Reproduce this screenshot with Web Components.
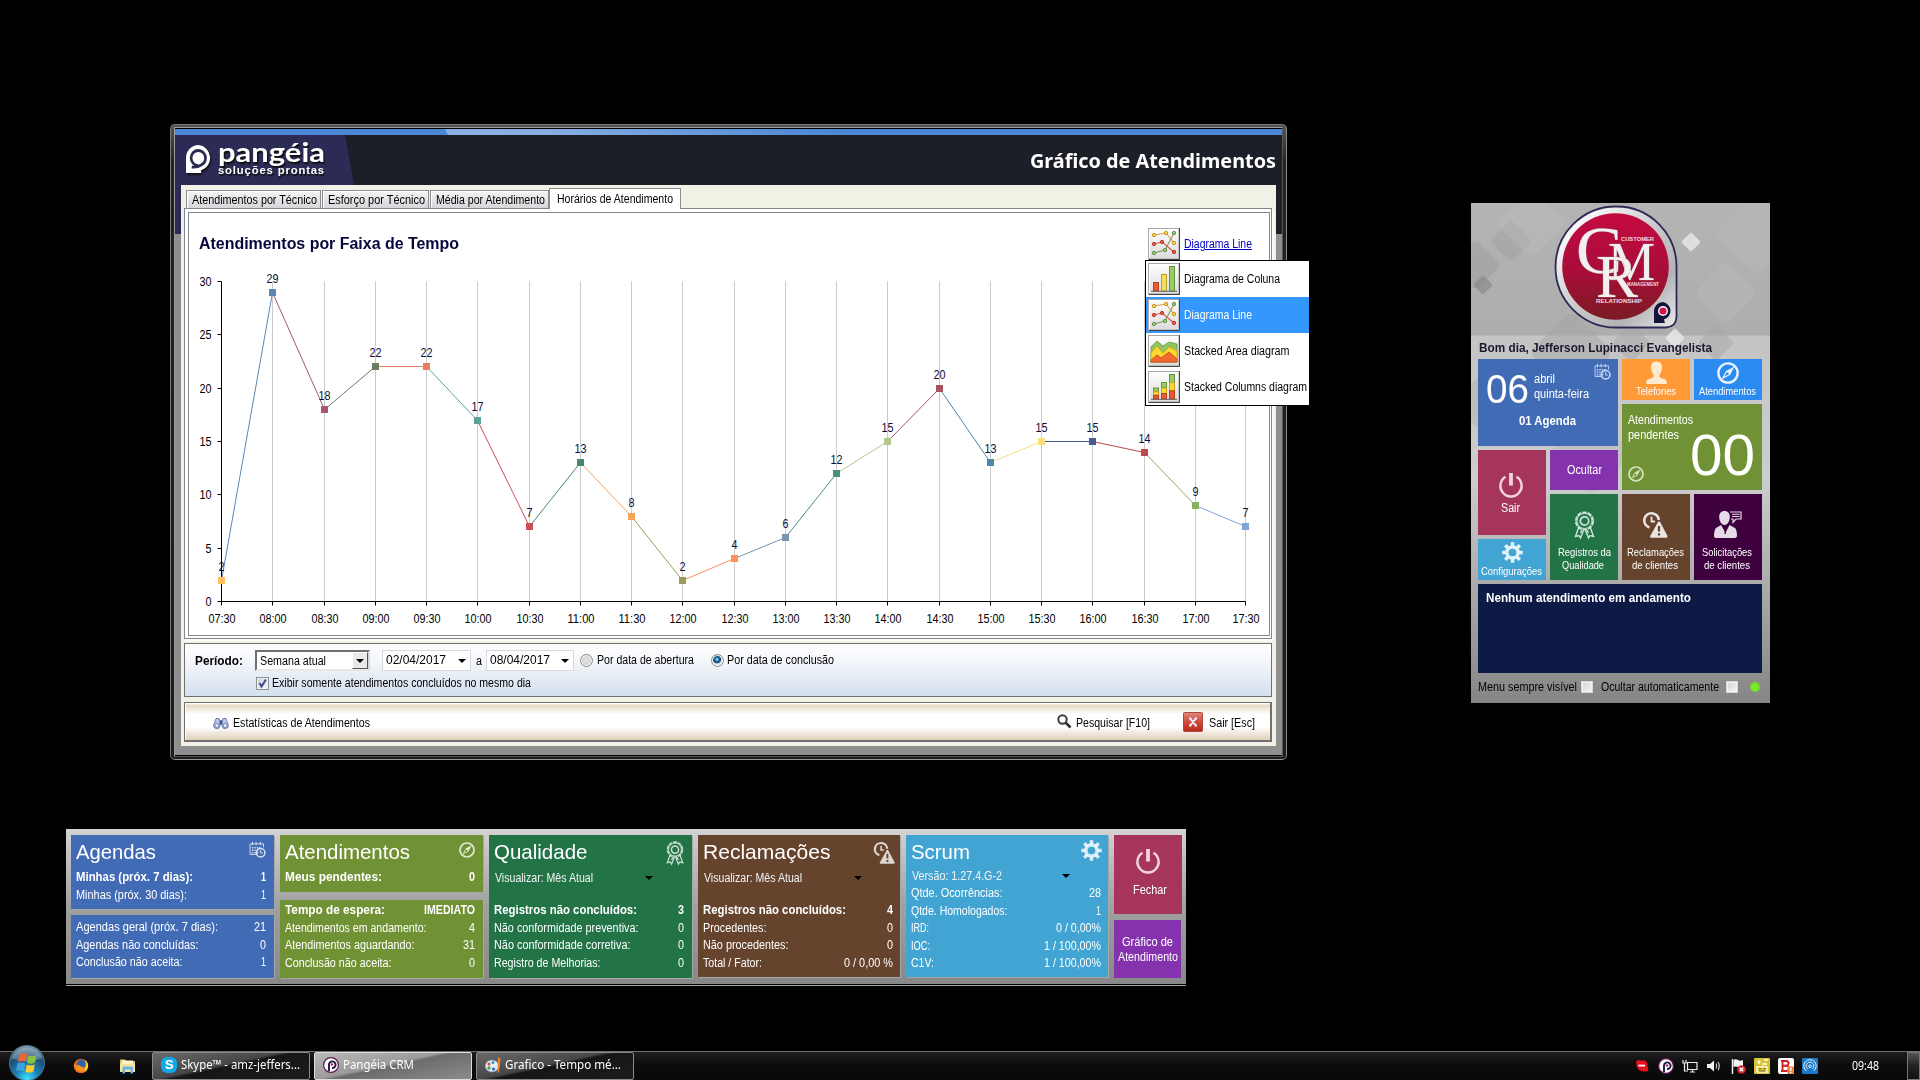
<!DOCTYPE html>
<html lang="pt-BR">
<head>
<meta charset="utf-8">
<title>Pangéia CRM</title>
<style>
html,body{margin:0;height:100%;background:#000;overflow:hidden}
body{font:12px/14px "Liberation Sans",Arial,sans-serif;color:#000}
</style>
</head>
<body>
<crm-desktop></crm-desktop>
<script>
const define=(name,html,init)=>customElements.define(name,class extends HTMLElement{
  constructor(){super();this.attachShadow({mode:'open'});}
  connectedCallback(){
    if(this.done)return;this.done=true;
    this.shadowRoot.innerHTML=typeof html==='function'?html(this):html;
    if(init)init(this,this.shadowRoot);
  }
});

/* ---------- icons ---------- */
const dot=(x,y,c,s)=>`<circle cx="${x}" cy="${y}" r="1.7" fill="${c}" stroke="${s}" stroke-width=".9"/>`;
const button=inner=>`<rect x="0" y="0" width="32" height="32" fill="#a8a8a8"/><path d="M31.5 0V31.500H1" fill="none" stroke="#444" stroke-width="1"/><rect x="1" y="1" width="29.5" height="29.5" fill="url(#bt)"/><path d="M1.5 30V1.5H30" fill="none" stroke="#fff" stroke-width="1"/><defs><linearGradient id="bt" x2="0" y2="1"><stop offset="0" stop-color="#fdfdfd"/><stop offset="1" stop-color="#dcdcdf"/></linearGradient></defs>${inner}`;
const gear=()=>{let t='';for(let i=0;i<8;i++)t+=`<rect x="10" y="0.2" width="4" height="5" transform="rotate(${i*45} 12 12)"/>`;return `<g fill="currentColor">${t}</g><circle cx="12" cy="12" r="6.4" fill="none" stroke="currentColor" stroke-width="4"/>`;};
const ICONS={
 cal:['0 0 24 24',`<g fill="none" stroke="currentColor" stroke-width="1.3"><path d="M1.5 19V4H20.500V9"/><path d="M1.500 19H10M5 1V6M10 1V6M16 1V6"/></g><g fill="currentColor">${[4,7.500,11].map(x=>[8.500,12,15.500].map(y=>`<rect x="${x}" y="${y}" width="2" height="2"/>`).join('')).join('')}<rect x="14.5" y="8.500" width="2" height="2"/></g><circle cx="16.500" cy="16.500" r="6" fill="none" stroke="currentColor" stroke-width="2.200"/><path d="M16.500 13V17H19.500" fill="none" stroke="currentColor" stroke-width="1.400"/>`],
 compass:['0 0 24 24',`<circle cx="12" cy="12" r="10.500" fill="none" stroke="currentColor" stroke-width="2.600"/><path d="M17.500 6.500L13.700 13.700L6.500 17.500L10.300 10.300Z" fill="none" stroke="currentColor" stroke-width="1.400"/><path d="M17.500 6.500L13.700 13.700L10.300 10.300Z" fill="currentColor"/>`],
 medal:['0 0 21 28',`<circle cx="10.500" cy="10" r="8.700" fill="none" stroke="currentColor" stroke-width="1.800" stroke-dasharray="4.500 1"/><circle cx="10.500" cy="10" r="7.500" fill="none" stroke="currentColor" stroke-width="1"/><circle cx="10.500" cy="10" r="4.200" fill="none" stroke="currentColor" stroke-width="1.700"/><path d="M4.500 17L1.500 25.500L5 24.500L6.500 27L9.500 19.500M16.500 17L19.500 25.500L16 24.500L14.500 27L11.500 19.500M8 19L6.500 22M13 19L14.500 22" fill="none" stroke="currentColor" stroke-width="1.400"/>`],
 warn:['0 0 26 26',`<path d="M7.500 15.500A7.300 7.300 0 1 1 16.800 8" fill="none" stroke="currentColor" stroke-width="2.600"/><path d="M9.500 4.500V9.500H13" fill="none" stroke="currentColor" stroke-width="1.800"/><path d="M16.300 9.500Q17.200 8.800 18 9.800L25.500 24Q25.800 25.500 24.500 25.700H9Q7.700 25.500 8.200 24Z" fill="currentColor"/><path d="M17 14V19.500M17 21.300V23.600" stroke="#65432d" stroke-width="2.200"/>`],
 gear:['0 0 24 24',gear()],
 power:['0 0 24 24',`<path d="M6.500 3.800A10.600 10.600 0 1 0 17.500 3.800" fill="none" stroke="currentColor" stroke-width="2.500"/><path d="M12 0V12.500" stroke="currentColor" stroke-width="3.800"/>`],
 person:['0 0 20 24',`<path d="M10 .5C13.800 .5 15.500 3.300 15.300 7C15.100 10.500 13.500 12.500 12.700 14.500Q12.500 16 14 16.700L18.500 18.500Q20 19.500 20 22Q20 23 18.500 23H1.500Q0 23 0 22Q0 19.500 1.500 18.500L6 16.700Q7.500 16 7.300 14.500C6.500 12.500 4.900 10.500 4.700 7C4.500 3.300 6.200 .5 10 .5Z" fill="currentColor"/>`],
 client:['0 0 28 27',`<path d="M10.500 0C14 0 16 2.500 15.800 6.500C15.500 11 13 14 10.500 14C8 14 5.500 11 5.200 6.500C5 2.500 7 0 10.500 0Z" fill="currentColor"/><path d="M7 14L11.500 22L15.500 14L21 17Q23 19 23 25.500Q22 27 20 27H2.500Q.5 27 0 25.500Q0 19 2 17Z" fill="currentColor"/><path d="M11.300 15V23" stroke="#3d003f" stroke-width="1.300"/><path d="M16 1H27V8H22L19 11.500V8H17" fill="none" stroke="currentColor" stroke-width="1.200"/><path d="M18 3.300H25.500M18 5.500H25.500" stroke="currentColor" stroke-width="1"/>`],
 line:['0 0 32 32',button(`<g fill="none" stroke-width="1.100"><path d="M6 7L18 5L26 15" stroke="#e0a33c"/><path d="M6 16L14 14L26 24" stroke="#d9534a"/><path d="M6 25L17 22L26 5" stroke="#8a9a5b"/></g>${dot(6,7,'#ffd94a','#b58a1c')}${dot(18,5,'#ffd94a','#b58a1c')}${dot(26,15,'#ffd94a','#b58a1c')}${dot(6,16,'#f05a3c','#b03020')}${dot(14,14,'#f05a3c','#b03020')}${dot(26,24,'#f05a3c','#b03020')}${dot(6,25,'#9bd07c','#4f8a34')}${dot(17,22,'#9bd07c','#4f8a34')}${dot(26,5,'#9bd07c','#4f8a34')}`)],
 cols:['0 0 32 32',button(`<rect x="5.500" y="19.500" width="5" height="8.500" fill="#ee5a30" stroke="#b8401c"/><rect x="13.500" y="11.500" width="5" height="16.500" fill="#f3dd5a" stroke="#b5a02c"/><rect x="21.500" y="3.500" width="5" height="24.500" fill="#9ccb66" stroke="#5f9440"/><path d="M3 28.300H29" stroke="#666"/>`)],
 area:['0 0 32 32',button(`<path d="M3 27V12L9 6L15 11L21 7L29 9V27Z" fill="#8fc461" stroke="#5f9a3c" stroke-width=".8"/><path d="M3 27V18L9 11L15 18L21 12L29 16V27Z" fill="#fbd92e" stroke="#cda618" stroke-width=".8"/><path d="M3 27V25L9 20L13 23L21 17L29 24V27Z" fill="#f26a33" stroke="#c9451c" stroke-width=".8"/>`)],
 stack:['0 0 32 32',button([[5.5,17],[13.5,11.5],[21.5,3.5]].map(([x,y])=>{const h=(28-y)/3;return `<rect x="${x}" y="${y}" width="5" height="${h}" fill="#9ccb66" stroke="#5f9440"/><rect x="${x}" y="${y+h}" width="5" height="${h}" fill="#fbd92e" stroke="#c9a21c"/><rect x="${x}" y="${y+2*h}" width="5" height="${h}" fill="#ee5a30" stroke="#b8401c"/>`}).join('')+'<path d="M3 28.300H29" stroke="#666"/>')],
 bino:['0 0 16 12',`<g stroke="#6576a8" stroke-width=".9"><path d="M3 1.500H6L7 4V9A3 3 0 0 1 .7 8Z" fill="#b9c7e8"/><path d="M13 1.500H10L9 4V9A3 3 0 0 0 15.300 8Z" fill="#b9c7e8"/><path d="M7 3.500H9V7.500H7Z" fill="#2c3866"/><circle cx="3.800" cy="8.500" r="2" fill="#e6eefb"/><circle cx="12.200" cy="8.500" r="2" fill="#e6eefb"/></g>`],
 search:['0 0 15 15',`<circle cx="5.500" cy="5.500" r="4.200" fill="none" stroke="#3c3c3c" stroke-width="2"/><path d="M8.700 8.700L13.500 13.500" stroke="#2c2c2c" stroke-width="2.600"/>`],
 close:['0 0 20 20',`<defs><linearGradient id="cr" x2="0" y2="1"><stop offset="0" stop-color="#e08a80"/><stop offset=".5" stop-color="#d04a3c"/><stop offset="1" stop-color="#b52a1c"/></linearGradient></defs><rect x=".5" y=".5" width="19" height="19" rx="1" fill="url(#cr)" stroke="#b3463c"/><path d="M7.300 6.700L12.700 13.300M12.700 6.700L7.300 13.300M6 6.500H8.500M11.500 6.500H14M6 13.500H8.500M11.500 13.500H14" stroke="#f4ecfa" stroke-width="2"/>`],
 pmark:['0 0 26 28',`<path d="M13 0A13 13 0 0 1 15.500 25.500L16 28H0V13A13 13 0 0 1 13 0Z" fill="#fff"/><path d="M12.500 20.500A7.500 7.500 0 1 1 20.300 13A7.500 7.500 0 0 1 16 19.800Q12 22.500 6 22" fill="none" stroke="#2b2b52" stroke-width="2.800"/>`],
 orb:['0 0 40 40',`<defs><radialGradient id="og" cx=".5" cy=".95" r=".95"><stop offset="0" stop-color="#3fe0ff"/><stop offset=".35" stop-color="#1a80b8"/><stop offset=".7" stop-color="#1f4f73"/><stop offset="1" stop-color="#7f9db0"/></radialGradient></defs><circle cx="20" cy="20" r="18.500" fill="url(#og)" stroke="#4a6d82"/><path d="M4 15A17 17 0 0 1 36 15Q20 21 4 15Z" fill="#fff" opacity=".25"/><path d="M12 11Q16 8.500 20 11L18.500 19Q14.500 17 10.500 19Z" fill="#ee6530"/><path d="M21.500 11.800Q26 14 30 11.500L28.500 19.500Q24 22 20 19.800Z" fill="#86c440"/><path d="M10 20.500Q14 18.500 18.200 20.800L16.800 28.500Q12.500 26.500 8.500 28.500Z" fill="#3fa3e0"/><path d="M19.700 21.500Q24 23.500 28.200 21.200L26.800 29Q22.500 31.500 18.300 29.300Z" fill="#fcc92a"/>`],
 firefox:['0 0 16 16',`<circle cx="8" cy="8" r="7.300" fill="#e8641b"/><circle cx="8.500" cy="6.300" r="4.800" fill="#2f64a8"/><path d="M1 5Q3 8 6 7L9 9Q12 10.500 13.500 7Q14 13 8.500 14Q2 13.500 1 5Z" fill="#f5931e"/><path d="M12 2Q15.500 5 15 9Q13.500 13 11 13.500Q14 9 12 2Z" fill="#ffd02e"/>`],
 folder:['0 0 17 16',`<path d="M1 1.500H6L7.500 3H16V14H1Z" fill="#e6c667"/><rect x="3" y="2.500" width="11" height="6" fill="#fff7cf"/><path d="M1 5.500H16V14H1Z" fill="#f4e2a0"/><path d="M3.500 15.500V10Q3.500 8.500 5 8.500H12.500Q14 8.500 14 10V15.500H11.500V11.500H6V15.500Z" fill="#6fb3df"/>`],
 paint:['0 0 16 16',`<ellipse cx="7" cy="9" rx="6.800" ry="6" fill="#e6edf4" stroke="#7f93a8" stroke-width=".7"/><circle cx="4" cy="7" r="1.600" fill="#e44"/><circle cx="8" cy="5.500" r="1.500" fill="#39c"/><circle cx="4" cy="11" r="1.700" fill="#4a4"/><circle cx="8.500" cy="12" r="1.600" fill="#26c"/><path d="M13 0L15.500 2L14 15.500H12.500Z" fill="#e08a2c"/>`],
 pcrm:['0 0 16 16',`<circle cx="8" cy="8" r="7.400" fill="#fff" stroke="#5c1650" stroke-width="1.200"/><path d="M6 14V7.500A3.300 3.300 0 1 1 9 11" fill="none" stroke="#1c1646" stroke-width="1.900"/><circle cx="9" cy="7.500" r="1.300" fill="#c62352"/>`],
 redpill:['0 0 16 16',`<path d="M2 4Q3 1 7 2.500H11Q14.500 5 13.500 8.500Q15.500 12 13 13.500H9Q4 12.500 2.500 8Z" fill="#e6101e"/><rect x="4.500" y="6.700" width="6.500" height="1.800" fill="#fff"/>`],
 net:['0 0 16 16',`<path d="M5.500 4.500H15V11.500H5.500Z" fill="#111" stroke="#eee" stroke-width="1.200"/><path d="M8 14H13M10.500 12V14M1 2V5H4V2M2.500 5V13H6" fill="none" stroke="#eee" stroke-width="1.200"/>`],
 vol:['0 0 16 16',`<path d="M1 6H4L8 2.500V13.500L4 10H1Z" fill="#f2f2f2"/><path d="M10 5.500Q11.500 8 10 10.500M12 4Q14.500 8 12 12" fill="none" stroke="#ccc" stroke-width="1.200"/>`],
 flag:['0 0 16 16',`<path d="M2.500 1V16" stroke="#eee" stroke-width="1.500"/><path d="M3.500 2Q6 .5 8 2T13 2V9Q10.500 10 8 9T3.500 9Z" fill="#f4f4f4"/><circle cx="11.500" cy="11.500" r="4.300" fill="#d42a2a"/><path d="M9.800 9.800L13.200 13.200M13.200 9.800L9.800 13.200" stroke="#fff" stroke-width="1.300"/>`],
 yellow:['0 0 16 16',`<rect width="16" height="16" rx="1" fill="#d8c335"/><path d="M3 14V9H13V14H3M5 6V3M3.500 4.500L5 2.500L6.500 4.500M8 6H13M10 2H14" fill="none" stroke="#fffde0" stroke-width="1.300"/><path d="M5 10.500H7M9.500 10.500H11.500M5 13H11.500" stroke="#6b5c10" stroke-width="1.200"/>`],
 bit:['0 0 16 16',`<rect width="16" height="16" rx="2" fill="#fff"/><path d="M4.500 3V13M3 3H8.500Q11 3.500 10.500 6Q10 7.500 8 7.700H5M8 7.700Q11.500 8 11 11Q10.500 13 8.500 13H3" fill="none" stroke="#d01c22" stroke-width="1.900"/><rect x="9.500" y="8.500" width="6.500" height="7.500" fill="#f0853a"/><path d="M12.700 9.500V13M12.700 14V15.300" stroke="#fff" stroke-width="1.400"/>`],
 wave:['0 0 16 16',`<rect width="16" height="16" rx="1" fill="#1c79c8"/><g fill="none" stroke="#e8f5ff" stroke-width="1"><path d="M4.500 13A6.200 6.200 0 1 1 11.500 13M5.700 11A3.800 3.800 0 1 1 10.300 11"/><circle cx="8" cy="8.300" r="1.300"/></g>`]
};
define('ui-icon',el=>{const [vb,body]=ICONS[el.getAttribute('name')];return `<style>:host{display:block;flex:none}svg{display:block;width:100%;height:100%;overflow:visible}</style><svg viewBox="${vb}" preserveAspectRatio="none">${body}</svg>`});

/* ---------- chart ---------- */
define('line-chart',()=>{
 const v=[2,29,18,22,22,17,7,13,8,2,4,6,12,15,20,13,15,15,14,9,7];
 const c=['#ffbf5f','#5b86b4','#a8557a','#6c7d63','#e87d60','#5ba39a','#cc5058','#45876a','#f5a45c','#9c9c58','#ff8f5c','#7b94ae','#4c8f7c','#b4c88c','#a85260','#4a88aa','#f7e07c','#485c92','#bb4a48','#86b262','#82a4d6'];
 const xs=[32,83,135,186,237,288,340,391,442,493,545,596,647,698,750,801,852,903,955,1006,1056];
 const X=i=>xs[i]+.5,Y=n=>340.500-n*320/30;
 let g='',t='',l='',m='';
 for(let i=1;i<21;i++)g+=`<path d="M${X(i)} ${Y(30)}V${Y(0)}" stroke="#cbcbcb"/>`;
 for(let i=0;i<=30;i+=5){t+=`<path d="M${X(0)-4} ${Math.floor(Y(i))+.5}H${X(0)}" stroke="#000"/><text x="${X(0)-10}" y="${Y(i)+4.5}" text-anchor="end" textLength="${i>9?12:6}" lengthAdjust="spacingAndGlyphs">${i}</text>`;}
 v.forEach((n,i)=>{
  const h=7*60+30+i*30,s=String(h/60|0).padStart(2,'0')+':'+String(h%60).padStart(2,'0');
  t+=`<path d="M${X(i)} ${Y(0)}v4" stroke="#000"/><text x="${X(i)+.5}" y="${Y(0)+21.500}" text-anchor="middle" textLength="27" lengthAdjust="spacingAndGlyphs">${s}</text><text class="v" x="${X(i)}" y="${Y(n)-9.500}" text-anchor="middle" textLength="${n>9?12:6}" lengthAdjust="spacingAndGlyphs">${n}</text>`;
  if(i)l+=`<path d="M${X(i-1)} ${Math.floor(Y(v[i-1]))+.5}L${X(i)} ${Math.floor(Y(n))+.5}" stroke="${c[i]}"/>`;
  m+=`<rect x="${X(i)-3.500}" y="${Math.floor(Y(n))-3}" width="7" height="7" fill="${c[i]}"/>`;
 });
 return `<style>:host{display:block}svg{display:block}text{font:12px "Liberation Sans",Arial,sans-serif;fill:#000}.v{fill:#0c0c3c}</style><svg width="1078" height="372">${g}<path d="M${X(0)} ${Y(30)}V${Y(0)}H${X(20)}" fill="none" stroke="#000"/>${l}${m}${t}</svg>`;
});

/* ---------- tabs ---------- */
define('ui-tab',`<style>:host{display:block;box-sizing:border-box;height:18px;border:1px solid #8d8d94;border-bottom:0;background:linear-gradient(#f4f4f4,#d6d6da);padding:2px 0 0 5px;box-shadow:inset 1px 1px #fff}:host([active]){height:21px;background:#fff;padding:3px 0 0 7px;position:relative;z-index:1;margin:0 0 -1px -1px}</style><slot></slot>`);

/* ---------- combo, date, radio, check ---------- */
define('ui-combo',`<style>:host{display:flex;box-sizing:border-box;width:115px;height:21px;border:2px solid;border-color:#6e6e6e #d8d8d8 #e8e8e8 #6e6e6e;background:#fff;align-items:center;padding-left:3px}span{flex:1}i{width:16px;height:17px;background:#e9e9ea;box-sizing:border-box;border:1px solid;border-color:#fff #555 #555 #fff;display:grid;place-items:center}i:after{content:"";border:4px solid transparent;border-top:4px solid #000;border-bottom:0}</style><span><slot></slot></span><i></i>`);
define('ui-date',`<style>:host{display:flex;box-sizing:border-box;width:89px;height:21px;border:1px solid #d5d9df;background:#fff;align-items:center;padding:0 4px 1px 3px;justify-content:space-between}i{border:4px solid transparent;border-top:4px solid #000;border-bottom:0;margin-top:2px}</style><slot></slot><i></i>`);
define('ui-radio',`<style>:host{display:block;flex:none;box-sizing:border-box;width:13px;height:13px;border-radius:50%;border:1px solid #8b8b8b;background:radial-gradient(#e0e0e0,#cfcfcf);box-shadow:inset 0 0 0 1px #f4f4f4}:host([on]){background:radial-gradient(circle at 45% 40%,#6ecbf4 0 1px,#1d5d8d 2px 3.300px,#163a5c 3.800px,#dfe6ee 4.300px)}</style>`);
define('ui-check',el=>`<style>:host{display:block;flex:none;box-sizing:border-box;width:13px;height:13px;border:1px solid #8b8f96;background:linear-gradient(135deg,#cfd2d8,#f6f6f6);box-shadow:inset 0 0 0 1px #f2f2f2}svg{display:block}</style>${el.hasAttribute('on')?'<svg width="11" height="11"><path d="M2.500 5L4.500 8.500L9 1.500" fill="none" stroke="#3c4f96" stroke-width="2"/></svg>':''}`);

/* ---------- chart-type menu ---------- */
define('menu-row',`<style>:host{display:flex;height:36px;align-items:center;padding-left:2px;gap:4px}:host([sel]){background:#3397fd;color:#fff}</style><slot></slot>`);
define('chart-menu',`<style>:host{display:block;width:163px;height:144px;border:1px solid #000;border-right:0;background:#fff;overflow:hidden}ui-icon{width:32px;height:32px}</style>
<menu-row><ui-icon name="cols"></ui-icon><ui-text w="96">Diagrama de Coluna</ui-text></menu-row>
<menu-row sel><ui-icon name="line"></ui-icon><ui-text w="68">Diagrama Line</ui-text></menu-row>
<menu-row><ui-icon name="area"></ui-icon><ui-text w="105.5">Stacked Area diagram</ui-text></menu-row>
<menu-row><ui-icon name="stack"></ui-icon><ui-text w="123">Stacked Columns diagram</ui-text></menu-row>`);

/* ---------- main window ---------- */
define('chart-window',`<style>
:host{display:block;box-sizing:border-box;width:1117px;height:636px;border:1px solid #b5b5b5;border-color:#777 #8a8a8a #999 #777;border-radius:5px;background:linear-gradient(#555,#222 6%,#1c1c1c);padding:2px 3px 2px}
.edge{box-sizing:border-box;height:100%;border:1px solid #777;border-color:#9c9c9c #555 #555 #999;background:#000;padding:1px 0 0}
.in{height:626px;width:1107px;background:linear-gradient(to bottom,transparent 105px,#8f8f8f 105px),linear-gradient(to right,#2b2b55 50%,#1d1f29 50%)}
.strip{height:6px;background:#4a86d3}
.strip i{display:block;height:6px;margin-left:270px;width:400px;background:linear-gradient(to right,#8ab2e4,#86aee2 25%,#4a86d3);clip-path:polygon(0 0,100% 0,100% 100%,3px 100%)}
header{height:50px;background:#1d1f28;display:flex;justify-content:space-between}
.brand{width:179px;box-sizing:border-box;height:50px;background:#2b2b55;clip-path:polygon(0 0,170px 0,179px 100%,0 100%);display:flex;gap:7px;padding:10px 0 0 11px;color:#fff}
.brand ui-icon{width:25px;height:28px;filter:drop-shadow(1px 2px 1px #111)}
.brand div{display:flex;flex-direction:column;text-shadow:1px 2px 1px #111}
.p{font:bold 26px/20px "Lato","Open Sans",sans-serif;margin-top:-3px;height:20px}
.s{font:bold 11px/12px "Liberation Sans",Arial,sans-serif;margin-top:2px;letter-spacing:.8px}
h1{margin:0;padding:12px 6px 0 0;font:bold 20px/28px "Noto Sans","Open Sans",sans-serif;color:#fff}
main{margin:0 6px;width:1095px;height:561px;background:#f1f1e6;box-sizing:border-box;padding:2px 4px 0 3px;display:flex;flex-direction:column}
.tabs{display:flex;align-items:flex-end;height:21px;padding-left:2px;gap:1px}
.page{box-sizing:border-box;height:431px;border:1px solid #85858d;background:#fff;padding:3px 1px 2px 3px;box-shadow:2px 2px #fbfbf7}
.card{box-sizing:border-box;height:424px;border:1px solid #85858d;position:relative}
.head{display:flex;justify-content:space-between;height:48px;box-sizing:border-box;padding:15px 17px 0 10px}
h2{margin:6px 0 0;font:bold 16px/20px "Liberation Sans",Arial,sans-serif;color:#06063c}
.link{display:flex;gap:4px;align-items:center;color:#0000c4;height:32px}
.link ui-text{text-decoration:underline}
.link ui-icon{width:32px;height:32px}
chart-menu{position:absolute;left:956px;top:47px;z-index:5}
.panel{box-sizing:border-box;border:1px solid #6f7072}
.filter{margin-top:4px;height:54px;background:linear-gradient(#fdfefe,#f3f6fa 35%,#d4e0ef);display:flex;flex-direction:column;padding:6px 0 0 10px}
.r{display:flex;align-items:center;height:21px}
.up{margin-bottom:2px}
.r2{height:18px;padding-left:61px;gap:3px;margin-top:3px}
.bar{margin-top:5px;height:40px;border-width:1px 2px 2px 1px;background:linear-gradient(#f9f6ef,#e5dac6 8%,#fff 30%,#fff 66%,#f3ece4 78%,#dfd3b8);box-shadow:inset 1px 1px #fff;display:flex;align-items:center;padding:2px 15px 0 28px}
</style>
<div class="edge"><div class="in"><div class="strip"><i></i></div>
<header><div class="brand"><ui-icon name="pmark"></ui-icon><div><ui-text class="p" w="107">pangéia</ui-text><ui-text class="s" w="107">soluções prontas</ui-text></div></div><h1><ui-text w="246">Gráfico de Atendimentos</ui-text></h1></header>
<main>
<div class="tabs"><ui-tab style="width:135px"><ui-text w="125">Atendimentos por Técnico</ui-text></ui-tab><ui-tab style="width:107px"><ui-text w="97">Esforço por Técnico</ui-text></ui-tab><ui-tab style="width:119px"><ui-text w="109">Média por Atendimento</ui-text></ui-tab><ui-tab active style="width:132px"><ui-text w="116">Horários de Atendimento</ui-text></ui-tab></div>
<div class="page"><div class="card">
<div class="head"><h2><ui-text w="260">Atendimentos por Faixa de Tempo</ui-text></h2><div class="link"><ui-icon name="line"></ui-icon><ui-text w="68">Diagrama Line</ui-text></div></div>
<line-chart></line-chart><chart-menu></chart-menu>
</div></div>
<div class="panel filter"><div class="r"><ui-text w="48" style="font-weight:bold;margin-right:12px">Período:</ui-text><ui-combo><ui-text w="66">Semana atual</ui-text></ui-combo><ui-date style="margin-left:12px"><ui-text w="60">02/04/2017</ui-text></ui-date><ui-text w="6" style="margin:0 4px 0 5px">a</ui-text><ui-date style="width:88px"><ui-text w="60">08/04/2017</ui-text></ui-date><ui-radio style="margin:0 4px 0 6px"></ui-radio><ui-text class="up" w="97">Por data de abertura</ui-text><ui-radio on style="margin:0 3px 0 17px"></ui-radio><ui-text class="up" w="107">Por data de conclusão</ui-text></div>
<div class="r r2"><ui-check on></ui-check><ui-text w="259">Exibir somente atendimentos concluídos no mesmo dia</ui-text></div></div>
<div class="panel bar"><ui-icon name="bino" style="width:16px;height:12px;margin-right:4px"></ui-icon><ui-text w="137">Estatísticas de Atendimentos</ui-text><ui-icon name="search" style="width:15px;height:15px;margin:-2px 4px 0 auto"></ui-icon><ui-text w="74">Pesquisar [F10]</ui-text><ui-icon name="close" style="width:20px;height:20px;margin:-1px 6px 0 33px"></ui-icon><ui-text w="46">Sair [Esc]</ui-text></div>
</main></div></div>`);

/* ---------- metro tile ---------- */
define('metro-tile',`<style>:host{display:flex;flex-direction:column;align-items:center;box-sizing:border-box;color:#fff;background:var(--tile)}</style><slot></slot>`);

/* ---------- CRM badge ---------- */
define('crm-logo',`<style>:host{display:block}svg{display:block}text{font-family:"Liberation Serif",serif;fill:#f5eef0;stroke:#8d8088;stroke-width:.6;paint-order:stroke}.k{font:bold 4.500px "Liberation Sans",sans-serif;stroke:none;fill:#f7dbe3}</style>
<svg width="124" height="124"><defs><linearGradient id="a" x1="0" y1="0" x2="1" y2="1"><stop offset=".1" stop-color="#fff"/><stop offset=".5" stop-color="#c9c9cc"/><stop offset=".75" stop-color="#b3b3b6"/><stop offset="1" stop-color="#ececec"/></linearGradient><linearGradient id="b" x2="0" y2="1"><stop offset="0" stop-color="#c50a42"/><stop offset=".55" stop-color="#a80d38"/><stop offset="1" stop-color="#7a1c24"/></linearGradient></defs>
<path d="M62 1.500A60 60 0 0 1 122.500 62V112Q122 122 112 122.500H62A60 60 0 0 1 62 1.500Z" fill="url(#a)" stroke="#2c2a56" stroke-width="1.800"/>
<circle cx="61.500" cy="61.500" r="53.300" fill="url(#b)"/>
<text x="22" y="68" font-size="68" textLength="46" lengthAdjust="spacingAndGlyphs">C</text>
<text x="54" y="75" font-size="55" textLength="47" lengthAdjust="spacingAndGlyphs">M</text>
<text x="42" y="92" font-size="62" textLength="42" lengthAdjust="spacingAndGlyphs">R</text>
<text class="k" x="67" y="36" textLength="33" lengthAdjust="spacingAndGlyphs">CUSTOMER</text><text class="k" x="73" y="81" textLength="32" lengthAdjust="spacingAndGlyphs">MANAGEMENT</text><text class="k" x="42" y="98" textLength="46" lengthAdjust="spacingAndGlyphs">RELATIONSHIP</text>
<path d="M109 97A9 9 0 0 1 110 114.500L111 118H100V106A9 9 0 0 1 109 97Z" fill="#14143c"/><circle cx="109" cy="106" r="5" fill="#fff"/><circle cx="109" cy="106" r="3.600" fill="#d0144c"/></svg>`);

/* ---------- CRM side menu ---------- */
const sq=(x,y,s,c,o,r=45)=>`<rect x="${x-s/2}" y="${y-s/2}" width="${s}" height="${s}" rx="${s*.14}" fill="${c}" opacity="${o}" transform="rotate(${r} ${x} ${y})"/>`;
define('crm-menu',()=>`<style>
:host{display:block;position:relative;width:299px;height:500px;background:linear-gradient(to bottom,#b4b4b4,#adadad 132px,#c4c4c4 133px,#cdcdcd 55%,#858585);overflow:hidden}
.bg{position:absolute;left:0;top:0}
.body{position:relative;display:flex;flex-direction:column;padding:2px 8px 0 7px}
crm-logo{margin-left:75.500px;height:131px}
.hi{font-weight:bold;font-size:13.500px;line-height:16px;color:#1d1830;margin:4px 0 3px 1px}
.grid{display:grid;grid-template-columns:repeat(4,68px);grid-template-rows:41px 42px 40px 41px 41px 89px;gap:4px}
.s{font-size:11px;line-height:13px}
.dn{line-height:11px}
.foot{display:flex;align-items:center;height:28px;color:#000}
.foot ui-check{width:12px;height:12px;border-color:#d8d8d8}
.day{display:flex;height:44px;width:100%;box-sizing:border-box;padding:5px 7px 0 8px}
.day div{display:flex;flex-direction:column;gap:1px;margin:8px auto 0 5px}
.day ui-icon{margin-top:-1px}
.big{font-size:40px;line-height:50px;height:44px}
.x{display:flex;width:100%;box-sizing:border-box;justify-content:space-between;padding:0 7px 0 6px}
</style>
<svg class="bg" width="299" height="500">${sq(40,38,30,'#9c9c9c',.4)}${sq(5,62,36,'#9c9c9c',.45)}${sq(12,82,14,'#868686',.6)}${sq(60,20,50,'#c0c0c0',.3)}${sq(255,90,45,'#bbb',.4)}${sq(245,140,26,'#a8a8a8',.5)}${sq(100,150,60,'#a4a4a4',.45)}${sq(160,140,28,'#a8a8a8',.5)}${sq(285,30,60,'#bcbcbc',.3)}${sq(10,200,40,'#aaa',.4)}${sq(120,250,60,'#b3b3b3',.4)}${sq(220,39,14,'#dedede',1)}${sq(204,135,14,'#e4e4e4',.9)}</svg>
<div class="body"><crm-logo></crm-logo>
<ui-text class="hi" w="233">Bom dia, Jefferson Lupinacci Evangelista</ui-text>
<div class="grid">
<metro-tile style="--tile:#426bb6;grid-area:1/1/3/3"><div class="day"><ui-text class="big" w="43">06</ui-text><div><ui-text w="21">abril</ui-text><ui-text w="55">quinta-feira</ui-text></div><ui-icon name="cal" style="width:17px;height:17px;color:#c9d8f4"></ui-icon></div><ui-text w="57" style="font-weight:bold;margin:11px 2px 0 0">01 Agenda</ui-text></metro-tile>
<metro-tile style="--tile:#ff9a36;grid-area:1/3;padding-top:2px"><ui-icon name="person" style="width:21px;height:24px;color:#ffe9cf"></ui-icon><ui-text class="s" w="40">Telefones</ui-text></metro-tile>
<metro-tile style="--tile:#2b8bf0;grid-area:1/4;padding-top:3px"><ui-icon name="compass" style="width:22px;height:22px;color:#e6f2ff"></ui-icon><ui-text class="s" w="57" style="margin:1px 1px 0 0">Atendimentos</ui-text></metro-tile>
<metro-tile style="--tile:#719234;grid-area:2/3/4/5;align-items:stretch"><div style="display:flex;flex-direction:column;padding:9px 0 0 6px;gap:1px"><ui-text w="65">Atendimentos</ui-text><ui-text w="51">pendentes</ui-text></div><div class="x" style="margin-top:-18px"><ui-icon name="compass" style="width:16px;height:16px;margin-top:42px;color:#d7e2c2"></ui-icon><ui-text w="65" style="font-size:58px;line-height:66px;margin-top:-2px">00</ui-text></div></metro-tile>
<metro-tile style="--tile:#a5355d;grid-area:3/1/5/2;padding-top:23px"><ui-icon name="power" style="width:24px;height:24px;color:#f3d3df;margin-right:2px"></ui-icon><ui-text w="19" style="margin:4px 3px 0 0">Sair</ui-text></metro-tile>
<metro-tile style="--tile:#8432ae;grid-area:3/2;padding-top:13px"><ui-text w="35">Ocultar</ui-text></metro-tile>
<metro-tile class="s" style="--tile:#227446;grid-area:4/2/6/3;padding-top:17px"><ui-icon name="medal" style="width:21px;height:28px;color:#cfe6d8;margin-bottom:7px"></ui-icon><ui-text w="53">Registros da</ui-text><ui-text w="42" style="margin-right:2px">Qualidade</ui-text></metro-tile>
<metro-tile class="s" style="--tile:#65432d;grid-area:4/3/6/4;padding-top:18px"><ui-icon name="warn" style="width:26px;height:26px;color:#ece4e0;margin:0 3px 8px 0"></ui-icon><ui-text w="57" style="margin-right:1px">Reclamações</ui-text><ui-text w="46" style="margin-right:3px">de clientes</ui-text></metro-tile>
<metro-tile class="s" style="--tile:#3e003f;grid-area:4/4/6/5;padding-top:17px"><ui-icon name="client" style="width:28px;height:27px;color:#e6dbe8;margin-bottom:8px"></ui-icon><ui-text w="50" style="margin-right:2px">Solicitações</ui-text><ui-text w="46" style="margin-right:3px">de clientes</ui-text></metro-tile>
<metro-tile style="--tile:#42a4d2;grid-area:5/1;padding-top:3px"><ui-icon name="gear" style="width:21px;height:21px;color:#def3fc"></ui-icon><ui-text class="s" w="61" style="margin:2px 1px 0 0">Configurações</ui-text></metro-tile>
<metro-tile style="--tile:#0d1a46;grid-area:6/1/7/5;align-items:flex-start;padding:7px 8px"><ui-text w="205" style="font-weight:bold">Nenhum atendimento em andamento</ui-text></metro-tile>
</div>
<div class="foot"><ui-text w="99">Menu sempre visível</ui-text><ui-check style="margin:0 8px 0 4px"></ui-check><ui-text w="118">Ocultar automaticamente</ui-text><ui-check style="margin-left:7px"></ui-check><i style="width:10px;height:10px;border-radius:50%;background:radial-gradient(#7ee82c 40%,#5cc91c);margin-left:12px"></i></div>
</div>`);

/* ---------- bottom statistics ---------- */
define('stat-row',`<style>:host{display:flex;justify-content:space-between;height:17.600px;line-height:18.700px;font-size:12px}:host([b]){font-weight:bold}</style><slot></slot>`);
const rows=a=>a.map(([l,w,v,vw,b])=>`<stat-row ${b?'b':''}><ui-text w="${w}">${l}</ui-text><ui-text w="${vw}">${v}</ui-text></stat-row>`).join('');
define('stat-box',`<style>:host{display:block;box-sizing:border-box;width:203px;background:var(--tile);color:#fff;padding:0 8px 0 5px;box-shadow:1px 1px #a7a7a7}</style><slot></slot>`);
const head=(t,w,ic,iw,ih,mt,mr=0)=>`<div class="h"><ui-text w="${w}">${t}</ui-text><ui-icon name="${ic}" style="width:${iw}px;height:${ih}px;margin:${mt}px ${mr}px 0 0"></ui-icon></div>`;
const sel=(t,w,y,r=31)=>`<div class="sel" style="padding-top:${y}px;padding-right:${r}px"><ui-text w="${w}">${t}</ui-text><i></i></div>`;
define('stats-panel',`<style>
:host{display:flex;box-sizing:border-box;width:1120px;height:155px;background:linear-gradient(#d3d3d3,#a0a0a0 50%,#888);padding:6px 4px 0 5px;gap:6px;box-shadow:0 1px #000,0 2px #aaa}
.c{display:flex;flex-direction:column}
.h{display:flex;justify-content:space-between;height:33px;box-sizing:border-box;padding-top:5px;font-size:21px;line-height:24px}
.h ui-icon{color:rgba(255,255,255,.78)}
.sel{display:flex;justify-content:space-between;align-items:center;box-sizing:border-box;color:#f4f4f4;margin-left:1px;height:33px;padding-bottom:15px}
.sel i{border:4px solid transparent;border-top:4px solid #000;border-bottom:0}
</style>
<div class="c" style="gap:6px"><stat-box style="--tile:#426bb6;height:74px">${head('Agendas',80,'cal',17,17,1)}${rows([['Minhas (próx. 7 dias):',117,'1',5,1],['Minhas (próx. 30 dias):',111,'1',5]])}</stat-box><stat-box style="--tile:#426bb6;height:63px;padding-top:3px">${rows([['Agendas geral (próx. 7 dias):',142,'21',12],['Agendas não concluídas:',122.5,'0',6],['Conclusão não aceita:',106.5,'1',5]])}</stat-box></div>
<div class="c" style="gap:8px"><stat-box style="--tile:#719234;height:57px">${head('Atendimentos',125,'compass',16,16,2)}${rows([['Meus pendentes:',97,'0',6,1]])}</stat-box><stat-box style="--tile:#719234;height:78px;padding-top:1px">${rows([['Tempo de espera:',100,'IMEDIATO',51,1],['Atendimentos em andamento:',141.5,'4',6],['Atendimentos aguardando:',129.5,'31',12],['Conclusão não aceita:',106.5,'0',6]])}</stat-box></div>
<stat-box style="--tile:#227446;height:143px">${head('Qualidade',93.5,'medal',18,24,1)}${sel('Visualizar: Mês Atual',98,2)}${rows([['Registros não concluídos:',143,'3',6,1],['Não conformidade preventiva:',144.5,'0',6],['Não conformidade corretiva:',136.5,'0',6],['Registro de Melhorias:',106.5,'0',6]])}</stat-box>
<stat-box style="--tile:#65432d;height:142px;width:202px;padding-right:7px">${head('Reclamações',127.5,'warn',22,22,2,-2)}${sel('Visualizar: Mês Atual',98,2,31)}${rows([['Registros não concluídos:',143,'4',6,1],['Procedentes:',63.5,'0',6],['Não procedentes:',85.5,'0',6],['Total / Fator:',59,'0 / 0,00 %',49]])}</stat-box>
<stat-box style="--tile:#42a4d2;height:142px;width:202px;padding-right:7px">${head('Scrum',59,'gear',21,21,0,-1)}<div style="height:16px;margin-top:-1px;padding-bottom:1px">${sel('Versão: 1.27.4.G-2',90,0)}</div>${rows([['Qtde. Ocorrências:',91.5,'28',12],['Qtde. Homologados:',96.5,'1',5],['IRD:',18,'0 / 0,00%',45],['IOC:',19,'1 / 100,00%',57],['C1V:',23,'1 / 100,00%',57]])}</stat-box>
<div class="c" style="gap:6px"><metro-tile style="--tile:#a5355d;width:68px;height:79px;padding-top:14px"><ui-icon name="power" style="width:24px;height:24px;color:#f3d3df"></ui-icon><ui-text w="34" style="margin:10px 0 0 4px">Fechar</ui-text></metro-tile><metro-tile style="--tile:#8432ae;width:67px;height:58px;padding-top:15px;gap:1px"><ui-text w="51">Gráfico de</ui-text><ui-text w="60">Atendimento</ui-text></metro-tile></div>`);

/* ---------- taskbar ---------- */
define('task-button',`<style>:host{display:flex;box-sizing:border-box;width:158px;height:28px;border:1px solid #8a8a8a;border-radius:2px;background:linear-gradient(168deg,#6a6a6a,#474747 45%,#161616 50%,#1c1c1c);align-items:center;padding:0 0 2px 8px;gap:4px;color:#fff;font:12.500px/18px "Noto Sans","Open Sans",sans-serif}:host([active]){border-color:#ddd;background:linear-gradient(168deg,#b9b9b9,#9b9b9b 45%,#6c6c6c 50%,#8b8b8b)}::slotted(ui-icon){width:16px;height:16px}</style><slot></slot>`);
define('task-bar',`<style>
:host{display:flex;box-sizing:border-box;width:1920px;height:29px;border-top:1px solid #6c6c6c;background:linear-gradient(#1e1e1e,#0d0d0d 45%,#090909)}
.orb{width:38px;height:38px;margin:-8px 27px 0 8px}
.q{width:16px;height:16px;margin:6px 0 0}
.btns{display:flex;gap:4px;margin-left:16px}
.tray{display:flex;gap:8px;margin:6px 0 0 auto}.tray ui-icon{width:16px;height:16px}
.sk{width:16px;height:16px;border-radius:6px;background:#13a7e8;color:#fff;font:bold 13px/16px "Liberation Sans",sans-serif;text-align:center}
.clk{font:12px/18px "Noto Sans","Open Sans",sans-serif;color:#fff;margin:5px 28px 0 34px}
.desk{width:13px;height:28px;box-sizing:border-box;border:1px solid #777;background:linear-gradient(#555,#222 50%,#111)}
</style>
<ui-icon class="orb" name="orb"></ui-icon><ui-icon class="q" name="firefox"></ui-icon><ui-icon class="q" name="folder" style="width:17px;margin-left:30px"></ui-icon>
<div class="btns"><task-button><span class="sk">S</span><ui-text w="119">Skype™ - amz-jeffers...</ui-text></task-button><task-button active><ui-icon name="pcrm"></ui-icon><ui-text w="71">Pangéia CRM</ui-text></task-button><task-button><ui-icon name="paint"></ui-icon><ui-text w="116">Grafico - Tempo mé...</ui-text></task-button></div>
<div class="tray"><ui-icon name="redpill"></ui-icon><ui-icon name="pcrm"></ui-icon><ui-icon name="net"></ui-icon><ui-icon name="vol"></ui-icon><ui-icon name="flag"></ui-icon><ui-icon name="yellow"></ui-icon><ui-icon name="bit"></ui-icon><ui-icon name="wave"></ui-icon></div>
<ui-text class="clk" w="27">09:48</ui-text><div class="desk"></div>`);

/* ---------- desktop ---------- */
define('crm-desktop',`<style>:host{display:block;position:relative;width:1920px;height:1080px;background:#000;overflow:hidden}chart-window{position:absolute;left:170px;top:124px}crm-menu{position:absolute;left:1471px;top:203px}stats-panel{position:absolute;left:66px;top:829px}task-bar{position:absolute;left:0;top:1051px}</style><chart-window></chart-window><crm-menu></crm-menu><stats-panel></stats-panel><task-bar></task-bar>`);

/* single-line label fitted to a fixed advance width */
define('ui-text','<style>:host{display:block;flex:none;white-space:nowrap}span{display:inline-block;transform-origin:0 50%;text-decoration:inherit}</style><span><slot></slot></span>',(el,root)=>{
  const s=root.querySelector('span'),w=+el.getAttribute('w');
  el.style.width=w+'px';
  s.style.transform='scaleX('+w/s.getBoundingClientRect().width+')';
});
</script>
</body>
</html>
